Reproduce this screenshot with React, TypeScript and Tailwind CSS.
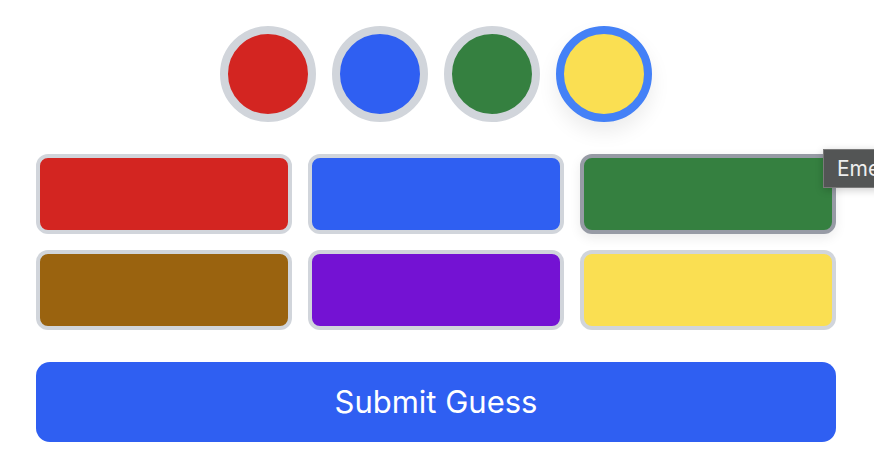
import { useState } from "react";

type Swatch = { name: string; hex: string };

const PALETTE: Swatch[] = [
  { name: "Crimson", hex: "#d32521" },
  { name: "Cobalt", hex: "#2f5ff2" },
  { name: "Emerald", hex: "#358040" },
  { name: "Amber", hex: "#9a630f" },
  { name: "Violet", hex: "#7412d3" },
  { name: "Lemon", hex: "#fadf52" },
];

const GUESS = ["#d32521", "#2f5ff2", "#358040", "#fadf52"];

export default function App() {
  const [active] = useState(3);

  return (
    <div
      className="relative h-[458px] w-[874px] overflow-hidden bg-white"
      style={{ fontFamily: "Inter, 'Noto Sans', sans-serif" }}
    >
      <div className="w-[872px] px-9 pt-[26px]">
        {/* Current guess slots */}
        <div className="flex justify-center gap-4">
          {GUESS.map((c, i) => (
            <div
              key={i}
              className={`h-24 w-24 rounded-full border-8 ${
                i === active
                  ? "border-[#4481f7] shadow-[0_10px_20px_rgba(0,0,0,0.08)]"
                  : "border-[#d1d5db]"
              }`}
              style={{ background: c }}
            />
          ))}
        </div>

        {/* Palette */}
        <div className="mt-8 grid grid-cols-3 gap-4">
          {PALETTE.map((s) => (
            <button
              key={s.name}
              title={s.name}
              className={`h-20 rounded-xl border-4 ${
                s.name === "Emerald"
                  ? "border-[#979ba5] shadow-[0_4px_12px_rgba(0,0,0,0.08)]"
                  : "border-[#d1d5db]"
              }`}
              style={{ background: s.hex }}
            />
          ))}
        </div>

        <button className="mt-8 flex h-20 w-full items-center justify-center rounded-[14px] bg-[#2f5ff2] text-[31px] text-white">
          Submit Guess
        </button>
      </div>

      {/* hover tooltip, clipped at the window edge */}
      <div className="absolute left-[823px] top-[149px] flex h-[39px] items-center whitespace-nowrap border border-[#7a7a7a] bg-[#535555] pl-[13px] pr-3 text-[21px] text-[#eeeeee] shadow-[0_2px_8px_rgba(0,0,0,0.2)]">
        Emerald
      </div>
    </div>
  );
}
